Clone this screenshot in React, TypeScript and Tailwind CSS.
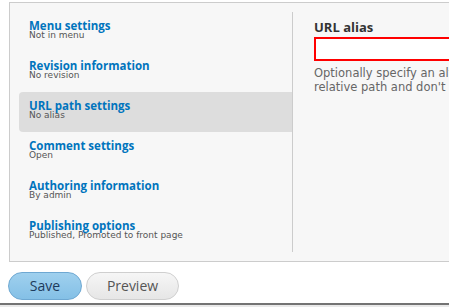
const tabs = [
  { title: "Menu settings", summary: "Not in menu" },
  { title: "Revision information", summary: "No revision" },
  { title: "URL path settings", summary: "No alias", active: true },
  { title: "Comment settings", summary: "Open" },
  { title: "Authoring information", summary: "By admin" },
  { title: "Publishing options", summary: "Published, Promoted to front page" },
];

export default function App() {
  return (
    <div className="relative h-[307px] w-[449px] overflow-hidden bg-white font-['Open_Sans',sans-serif]">
      <div className="pl-[9px] pt-[2px]">
        {/* vertical tabs */}
        <div className="flex w-[700px] items-stretch border border-r-0 border-[#cccccc] bg-[#f7f7f7] pb-[9px] pl-[9px] pt-[9px]">
          <ul className="flex w-[273px] shrink-0 flex-col">
            {tabs.map((tab) => (
              <li
                key={tab.title}
                className={`flex h-[40px] flex-col px-[10px] pt-[9px] ${
                  tab.active ? "rounded-l-[4px] bg-[#dddddd]" : ""
                }`}
              >
                <span className="text-[11.5px] font-bold leading-[10px] text-[#0074bd]">{tab.title}</span>
                <span className="font-['DejaVu_Sans',sans-serif] text-[9px] leading-[9px] text-[#555555]">
                  {tab.summary}
                </span>
              </li>
            ))}
          </ul>
          <div className="min-w-0 flex-1 border-l border-[#cccccc] pl-[21px] pt-[7px]">
            <label className="block text-[13px] font-bold leading-[16px] text-[#333333]">URL alias</label>
            <div className="mt-[2px] h-[24px] w-[400px] border-2 border-[#ff0000] bg-white" />
            <p className="mt-[5px] whitespace-nowrap font-['DejaVu_Sans',sans-serif] text-[11.5px] leading-[14px] text-[#666666]">
              Optionally specify an alternative URL by which this content can be accessed.
              <br />
              relative path and don't add a trailing slash or the URL alias won't work.
            </p>
          </div>
        </div>
      </div>

      <div className="mt-[10px] flex gap-[4px] pl-[8px]">
        <button className="h-[28px] w-[74px] rounded-full border border-[#6ea8d2] bg-gradient-to-b from-[#9fd0ee] to-[#84c0e6] text-[14px] leading-[26px] text-[#1d3b5c]">
          Save
        </button>
        <button className="h-[28px] w-[93px] rounded-full border border-[#cfcfcf] bg-gradient-to-b from-[#f6f6f6] to-[#e6e6e6] text-[14px] leading-[26px] text-[#555555]">
          Preview
        </button>
      </div>

      <div className="mt-[3px] h-[2px] bg-[#737373]" />
      <div className="h-[10px] bg-[#e9e9e9]" />
    </div>
  );
}
